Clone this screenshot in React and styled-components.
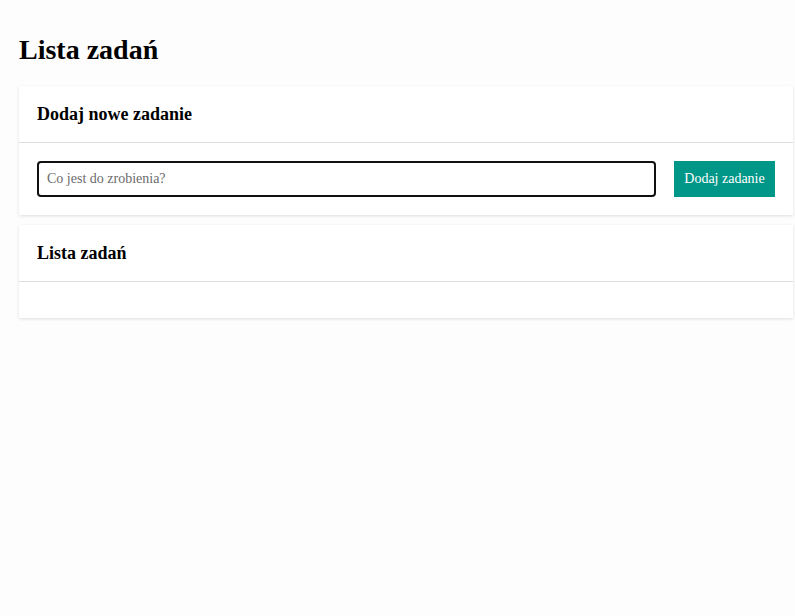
import React, { useState } from "react";
import styled, { createGlobalStyle } from "styled-components";

const GlobalStyle = createGlobalStyle`
  html, body {
    margin: 0;
    padding: 0;
    background: #fdfdfd;
  }
  body {
    font-family: "Liberation Serif", "Times New Roman", serif;
    color: #000;
  }
`;

// Kontener strony
const Page = styled.div`
  padding: 0 2px 0 19px;
`;

const Title = styled.h1`
  font-size: 28px;
  line-height: 32px;
  font-weight: bold;
  margin: 34px 0 20px;
`;

const Card = styled.section`
  background: #fff;
  box-shadow: 0 1px 3px rgba(0, 0, 0, 0.12);
  margin-bottom: 10px;
`;

const CardHeader = styled.h2`
  margin: 0;
  padding: 18px;
  font-size: 18px;
  line-height: 20px;
  font-weight: bold;
  border-bottom: 1px solid #dedede;
`;

const CardBody = styled.div`
  padding: 18px;
  display: flex;
  gap: 18px;
  align-items: stretch;
`;

const Input = styled.input`
  flex: 1;
  height: 36px;
  box-sizing: border-box;
  border: 2px solid #111;
  border-radius: 4px;
  padding: 0 8px;
  font-family: "Liberation Serif", "Times New Roman", serif;
  font-size: 14px;
  background: #fff;
  outline: none;

  &::placeholder {
    color: #6b6b6b;
  }
`;

const Button = styled.button`
  height: 36px;
  width: 101px;
  border: none;
  background: #009688;
  color: #fff;
  font-family: "Liberation Serif", "Times New Roman", serif;
  font-size: 14px;
  padding: 0 8px;
  cursor: pointer;
`;

const App = () => {
  const [tekst, setTekst] = useState("");
  const [zadania, setZadania] = useState([]);

  const dodaj = () => {
    if (!tekst.trim()) return;
    setZadania([...zadania, tekst.trim()]);
    setTekst("");
  };

  return (
    <>
      <GlobalStyle />
      <Page>
        <Title>Lista zadań</Title>
        <Card>
          <CardHeader>Dodaj nowe zadanie</CardHeader>
          <CardBody>
            <Input
              placeholder="Co jest do zrobienia?"
              value={tekst}
              onChange={(e) => setTekst(e.target.value)}
            />
            <Button onClick={dodaj}>Dodaj zadanie</Button>
          </CardBody>
        </Card>
        <Card>
          <CardHeader>Lista zadań</CardHeader>
          <CardBody>
            {zadania.map((z, i) => (
              <div key={i}>{z}</div>
            ))}
          </CardBody>
        </Card>
      </Page>
    </>
  );
};

export default App;
